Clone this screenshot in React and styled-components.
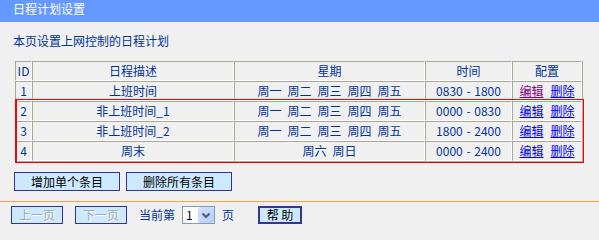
import React from "react";
import styled, { createGlobalStyle } from "styled-components";

const GlobalStyle = createGlobalStyle`
  body {
    margin: 0;
    background: #f0f0f0;
    font-family: "Noto Sans CJK SC", "Liberation Sans", sans-serif;
    font-size: 12px;
    line-height: 18px;
    color: #003399;
  }
`;

const columns = [
  { key: "id", title: "ID", width: 17 },
  { key: "desc", title: "日程描述", width: 202 },
  { key: "week", title: "星期", width: 191 },
  { key: "time", title: "时间", width: 87 },
  { key: "conf", title: "配置", width: 70 },
];

const rows = [
  { id: 1, desc: "上班时间", week: "周一 周二 周三 周四 周五", time: "0830 - 1800", visited: true },
  { id: 2, desc: "非上班时间_1", week: "周一 周二 周三 周四 周五", time: "0000 - 0830" },
  { id: 3, desc: "非上班时间_2", week: "周一 周二 周三 周四 周五", time: "1800 - 2400" },
  { id: 4, desc: "周末", week: "周六 周日", time: "0000 - 2400" },
];

function App() {
  return (
    <>
      <GlobalStyle />
      <TitleBar>日程计划设置</TitleBar>
      <Intro>本页设置上网控制的日程计划</Intro>

      <Table>
        <Row>
          {columns.map((c) => (
            <Cell key={c.key} $width={c.width}>{c.title}</Cell>
          ))}
        </Row>
        {rows.map((r) => (
          <Row key={r.id}>
            <Cell $width={17}>{r.id}</Cell>
            <Cell $width={202}>{r.desc}</Cell>
            <Cell $width={191}><Spaced $spacing={3.3}>{r.week}</Spaced></Cell>
            <Cell $width={87}><Spaced $spacing={1}>{r.time}</Spaced></Cell>
            <Cell $width={70}>
              <Link href="#" $visited={r.visited}>编辑</Link>
              <Link href="#">删除</Link>
            </Cell>
          </Row>
        ))}
        <Highlight />
      </Table>

      <ActionRow>
        <Button>增加单个条目</Button>
        <Button>删除所有条目</Button>
      </ActionRow>

      <Divider />

      <Pager>
        <NavButton disabled>上一页</NavButton>
        <NavButton disabled>下一页</NavButton>
        <Label>当前第</Label>
        <Select>
          <SelectValue>1</SelectValue>
          <SelectArrow>
            <svg width="10" height="7" viewBox="0 0 10 7">
              <path d="M1.5 1.5 L5 5 L8.5 1.5" fill="none" stroke="#4d6185" strokeWidth="2.2" />
            </svg>
          </SelectArrow>
        </Select>
        <Label>页</Label>
        <HelpButton>帮 助</HelpButton>
      </Pager>
    </>
  );
}

const TitleBar = styled.div`
  height: 22px;
  line-height: 18px;
  padding-left: 13px;
  background: #6699ff;
  color: #fff;
`;

const Intro = styled.div`
  margin-top: 10px;
  padding-left: 13px;
`;

const Table = styled.div`
  position: relative;
  display: flex;
  flex-direction: column;
  width: 567px;
  margin: 11px 0 0 15px;
  border-right: 1px solid #aca899;
  border-bottom: 1px solid #aca899;
`;

const Row = styled.div`
  display: flex;
`;

const Cell = styled.div`
  box-sizing: border-box;
  width: ${(p) => p.$width}px;
  height: 20px;
  display: flex;
  align-items: center;
  justify-content: center;
  gap: 7px;
  border-left: 1px solid #aca899;
  border-top: 1px solid #aca899;
  border-right: 1px solid #fff;
  border-bottom: 1px solid #fff;
  white-space: pre;
`;

const Spaced = styled.span`
  word-spacing: ${(p) => p.$spacing}px;
`;

const Link = styled.a`
  color: ${(p) => (p.$visited ? "#800080" : "#0000ff")};
  text-decoration: underline;
`;

const Highlight = styled.div`
  position: absolute;
  left: 0;
  top: 38px;
  width: 569px;
  height: 64px;
  box-sizing: border-box;
  border: 1px solid #ff0000;
  border-left-width: 2px;
  pointer-events: none;
`;

const ActionRow = styled.div`
  display: flex;
  gap: 6px;
  margin-top: 10px;
  padding-left: 14px;
`;

const Button = styled.button`
  box-sizing: border-box;
  width: 106px;
  height: 19px;
  padding: 0;
  border: 1px solid #333399;
  background: #cce9ff;
  color: #000;
  font-family: inherit;
  font-size: 12px;
  line-height: 16px;
`;

const Divider = styled.div`
  height: 1px;
  margin-top: 10px;
  background: #f5a24e;
`;

const Pager = styled.div`
  display: flex;
  align-items: center;
  padding: 4px 0 0 11px;
`;

const NavButton = styled(Button)`
  width: 52px;
  height: 18px;
  margin-right: 12px;
  color: #a9a9a9;
  text-shadow: 1px 1px 0 #fff;
`;

const Label = styled.span`
  margin-right: 7px;
`;

const Select = styled.div`
  box-sizing: border-box;
  display: flex;
  width: 33px;
  height: 18px;
  margin-right: 7px;
  border: 1px solid #7f9db9;
  background: #fff;
`;

const SelectValue = styled.span`
  flex: 1;
  padding-left: 3px;
  color: #000;
  line-height: 16px;
`;

const SelectArrow = styled.span`
  width: 16px;
  display: flex;
  align-items: center;
  justify-content: center;
  background: linear-gradient(135deg, #d6e0fd, #b9cbf8);
  border-radius: 2px;
`;

const HelpButton = styled(Button)`
  width: 44px;
  height: 18px;
  margin-left: 17px;
  border-width: 2px;
  line-height: 14px;
`;

export default App;
